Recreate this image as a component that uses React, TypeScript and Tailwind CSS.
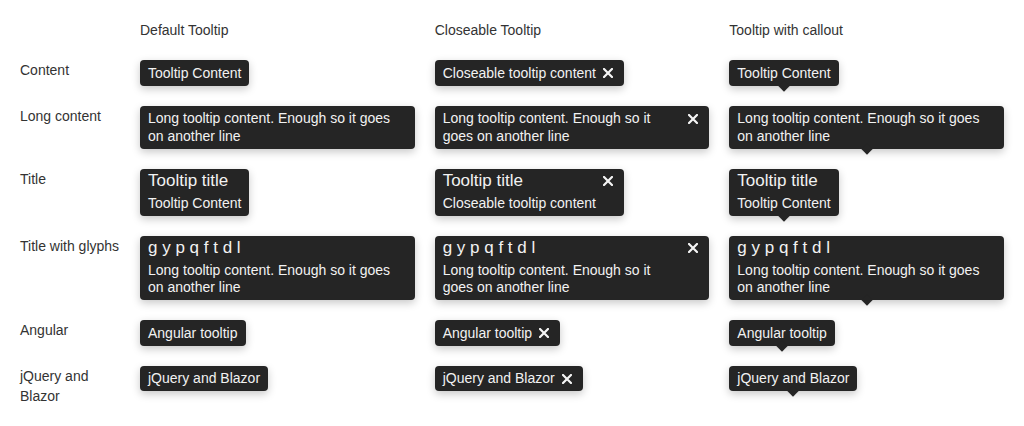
import type { ReactNode } from 'react';

type Variant = 'default' | 'closeable' | 'callout';

const CloseIcon = () => (
  <svg width="10" height="10" viewBox="0 0 10 10" className="shrink-0">
    <path d="M1 1L9 9M9 1L1 9" stroke="#f5f5f5" strokeWidth="2.2" strokeLinecap="square" />
  </svg>
);

function Tooltip({ variant, title, children }: { variant: Variant; title?: string; children: ReactNode }) {
  const closeable = variant === 'closeable';
  return (
    <div
      className={`relative inline-flex max-w-full items-start rounded-[4px] bg-[#252525] pt-[4.5px] pb-[3.5px] pl-2 text-[#f2f2f2] shadow-[0_3px_9px_rgba(0,0,0,0.22)] ${closeable ? 'pr-[11px]' : 'pr-2'}`}
    >
      <div className="min-w-0">
        {title && <div className="mb-[5.5px] text-[17px] leading-4">{title}</div>}
        <div className="text-[14px] leading-tight">{children}</div>
      </div>
      {closeable && (
        <div className={`ml-[7px] flex items-center ${title ? 'h-4' : 'h-[17.5px]'}`}>
          <CloseIcon />
        </div>
      )}
      {variant === 'callout' && (
        <span className="absolute left-1/2 -bottom-[4px] h-2 w-2 -translate-x-1/2 rotate-45 bg-[#252525]" />
      )}
    </div>
  );
}

const rows: { label: string; title?: string; text: string; closeText?: string }[] = [
  { label: 'Content', text: 'Tooltip Content', closeText: 'Closeable tooltip content' },
  { label: 'Long content', text: 'Long tooltip content. Enough so it goes on another line' },
  { label: 'Title', title: 'Tooltip title', text: 'Tooltip Content', closeText: 'Closeable tooltip content' },
  { label: 'Title with glyphs', title: 'g y p q f t d l', text: 'Long tooltip content. Enough so it goes on another line' },
  { label: 'Angular', text: 'Angular tooltip' },
  { label: 'jQuery and Blazor', text: 'jQuery and Blazor' },
];

export default function App() {
  return (
    <div className="min-h-[426px] bg-white px-5 pt-5 text-[14px] leading-5 text-[#333] [font-family:'Liberation_Sans',Arial,sans-serif]">
      <div className="grid grid-cols-[100px_1fr_1fr_1fr] gap-x-5 gap-y-5">
        <div />
        <div>Default Tooltip</div>
        <div>Closeable Tooltip</div>
        <div>Tooltip with callout</div>
        {rows.map((row) => (
          <div key={row.label} className="contents">
            <div>{row.label}</div>
            <div>
              <Tooltip variant="default" title={row.title}>{row.text}</Tooltip>
            </div>
            <div>
              <Tooltip variant="closeable" title={row.title}>{row.closeText ?? row.text}</Tooltip>
            </div>
            <div>
              <Tooltip variant="callout" title={row.title}>{row.text}</Tooltip>
            </div>
          </div>
        ))}
      </div>
    </div>
  );
}
